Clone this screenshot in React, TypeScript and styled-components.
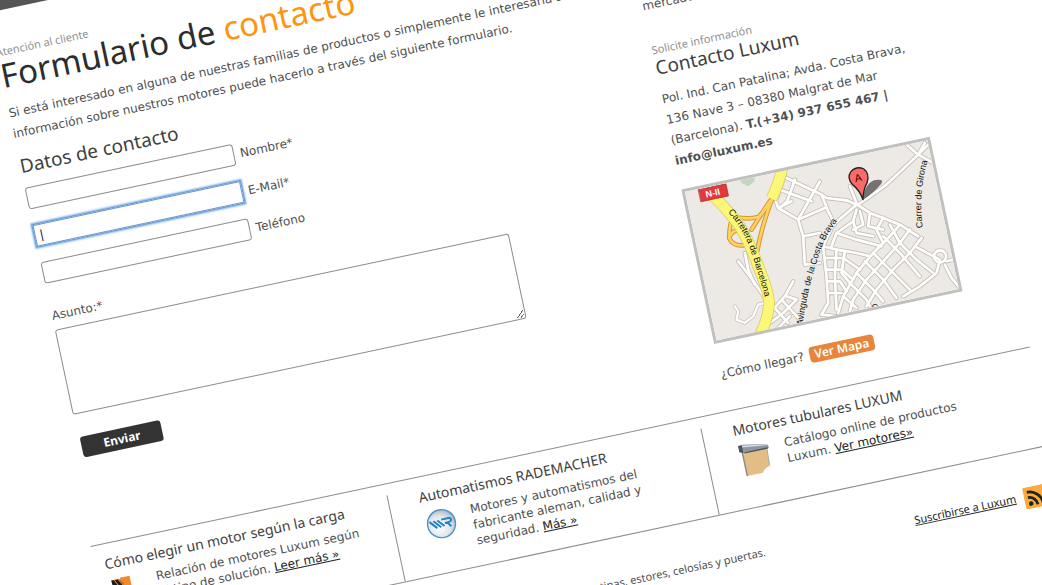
import React from "react";
import styled, { createGlobalStyle, css } from "styled-components";

const bodyFont = `"DejaVu Sans", "Noto Sans", sans-serif`;
const displayFont = `"Noto Sans", "DejaVu Sans", sans-serif`;

const GlobalStyle = createGlobalStyle`
  *, *::before, *::after { box-sizing: border-box; }
  html, body { margin: 0; background: #fff; }
  body { font: 12px/21px ${bodyFont}; color: #505050; }
  h1, h2, h3, p { margin: 0; font-weight: 400; }
`;

const Stage = styled.div`
  height: 100vh;
  overflow: hidden;
`;

const Page = styled.div`
  width: 100%;
  max-width: 960px;
  transform-origin: 0 0;
  transform: rotate(-12deg) translateX(-25px);
`;

const TopBar = styled.header`
  height: 10px;
  background: #555;
`;

const Columns = styled.main`
  display: grid;
  grid-template-columns: minmax(0, 602fr) minmax(0, 308fr);
  column-gap: 40px;
  padding: 0 0 29px 10px;
`;

const FormColumn = styled.section`
  padding-top: 33px;
`;

const ContactColumn = styled.aside`
  padding-top: 120px;
`;

const Kicker = styled.p`
  font: 11px/16px ${displayFont};
  color: #909090;
`;

const Title = styled.h1`
  font: 33px/32px ${displayFont};
  color: #2b2e30;
  white-space: nowrap;

  em {
    font-style: normal;
    color: #ff9410;
  }
`;

const Intro = styled.p`
  margin: 12px 0 10px;
  white-space: nowrap;
`;

const Subtitle = styled.h2<{ $tight?: boolean }>`
  font: 19px/24px ${displayFont};
  line-height: ${(p) => (p.$tight ? 20 : 24)}px;
  color: #404040;
`;

const Form = styled.form`
  display: flex;
  flex-direction: column;
  align-items: flex-start;
  margin-top: 10px;
`;

const Fields = styled.div`
  display: flex;
  flex-direction: column;
  gap: 16px;
  width: 100%;
`;

const Field = styled.div`
  display: flex;
  align-items: center;
  gap: 6px;

  label {
    line-height: 22px;
  }
`;

const control = css`
  border: 1px solid #8c8c8c;
  border-radius: 3px;
  background: #fff;
  color: #222;
  font: 12px/16px ${bodyFont};
  outline: none;
`;

const TextInput = styled.input<{ $focused?: boolean }>`
  ${control}
  width: 212px;
  height: 22px;
  padding: 0 4px;
  ${(p) =>
    p.$focused &&
    css`
      border-color: #6b98d0;
      border-radius: 0;
      box-shadow: 0 0 0 1px #6b98d0, 0 0 2px 2px #7fb2ec;
    `}
`;

const MessageLabel = styled.label`
  margin-top: 24px;
  line-height: 18px;
`;

const Message = styled.textarea`
  ${control}
  width: 77%;
  height: 87px;
  margin-top: 5px;
  padding: 4px 6px;
  resize: both;
`;

const SubmitButton = styled.button`
  margin: 23px 0 0 2px;
  width: 82px;
  height: 21px;
  padding: 0;
  border: 0;
  border-radius: 3px;
  background: #333;
  color: #fff;
  font: 700 12px/20px ${displayFont};
`;

const Teaser = styled.p`
  margin-bottom: 26px;
`;

const Address = styled.p`
  margin-top: 12px;
`;

const MapFrame = styled.div`
  width: 254px;
  height: 158px;
  margin-top: 18px;
  border: 3px solid #c0c0c0;
  overflow: hidden;

  svg {
    display: block;
  }
`;

const Directions = styled.div`
  display: flex;
  align-items: center;
  gap: 6px;
  margin-top: 23px;
  line-height: 16px;
`;

const MapButton = styled.a`
  padding: 0 5px;
  border-radius: 4px;
  background: #e8853a;
  color: #fff;
  font: 600 12px/16px ${displayFont};
  text-decoration: none;
`;

const Features = styled.section`
  display: grid;
  grid-template-columns: 300fr 321fr 339fr;
  padding-top: 11px;
  border-top: 1px solid #8c8c8c;
  border-bottom: 1px solid #8c8c8c;
`;

const Feature = styled.article<{ $first?: boolean }>`
  display: grid;
  grid-template-columns: 48px 1fr;
  grid-template-rows: auto 1fr;
  row-gap: 5px;
  min-height: 88px;
  padding: 0 30px 0 ${(p) => (p.$first ? 10 : 30)}px;
  border-left: ${(p) => (p.$first ? 0 : 1)}px solid #8c8c8c;

  h3 {
    grid-column: 1 / -1;
    font: 14px/18px ${displayFont};
    white-space: nowrap;
    color: #404040;
  }

  p {
    line-height: 16px;
    white-space: nowrap;
  }

  svg {
    display: block;
    margin: 1px 0 0 2px;
  }
`;

const TextLink = styled.a`
  color: #222;
  text-decoration: underline;
`;

const Footer = styled.footer`
  display: grid;
  grid-template-columns: 668fr 292fr;
  padding: 36px 13px 40px 0;
  font: 11px/18px ${displayFont};

  p {
    text-align: right;
  }
`;

const Subscribe = styled.div`
  display: flex;
  justify-content: flex-end;
  gap: 8px;

  svg {
    display: block;
  }
`;

const streets = [
  "M345 135 L318 215 L325 235 L385 270 L400 320 L405 405 L450 400",
  "M350 145 L445 190 L470 205 L530 212 L560 225",
  "M450 155 L430 190 L385 270",
  "M330 180 L425 215",
  "M375 150 L352 215 L330 235",
  "M385 270 L465 235 M455 195 L475 245 L495 285",
  "M400 320 L450 310 M325 235 L365 215",
  "M540 170 L562 225 L600 250 L640 265 L690 285 L745 320",
  "M565 225 L650 165 L745 75 L775 45",
  "M705 40 L745 75 L790 100 M745 75 L765 40",
  "M560 225 L490 285 L460 350 L470 440 L475 520 L455 555",
  "M560 240 L550 275 L500 310 L485 350",
  "M600 250 L595 290 L640 300 M640 265 L620 300 L640 340",
  "M550 275 L560 310 L610 320 M500 310 L560 330 L635 350",
  "M570 245 L580 285 L550 300",
  "M690 285 L660 320 L610 370 L560 430 L520 500 L505 550",
  "M720 300 L690 340 L640 395 L590 450 L550 510 L540 545",
  "M755 325 L720 370 L670 420 L620 480 L590 530",
  "M660 285 L690 340 L740 390 L790 430",
  "M640 320 L690 370 L750 440",
  "M610 370 L660 420 L720 480",
  "M585 395 L640 450 L680 505",
  "M560 430 L610 480 L640 515",
  "M540 460 L590 510 L600 530",
  "M520 500 L560 535",
  "M460 350 L500 360 L560 370 L600 380",
  "M465 385 L520 385 L570 420",
  "M468 420 L515 420 L550 450",
  "M472 455 L510 455 L530 485 M475 490 L515 490",
  "M500 360 L495 440 L500 540",
  "M525 365 L515 430 L540 460",
  "M755 325 L735 350 L810 390 L800 430 L750 470 L700 500",
  "M830 395 L850 390 M825 405 L845 445 L870 475",
  "M205 395 L240 440 L275 490 L300 530",
  "M225 370 L235 420 L255 465",
  "M300 550 L345 500 L370 455 M310 530 L355 580 M340 515 L385 565",
  "M300 580 L340 550 L380 510 L350 500 M320 600 L360 560",
  "M455 555 L500 560",
];

const ramps = [
  "M308 205 Q285 245 265 262 Q235 270 195 262",
  "M308 205 Q275 290 262 365",
  "M300 215 Q260 275 245 300",
  "M190 260 Q178 285 178 325 Q190 355 235 345",
  "M178 325 Q185 300 215 300",
];

const highways = [
  "M125 195 Q170 235 210 290 Q245 350 265 410 Q295 480 298 520 Q295 570 268 620",
  "M340 105 Q328 160 305 207",
];

const loop = "M810 362 a18 18 0 1 0 1 0";
const lane = "M195 530 L205 545 L200 570 L225 580 L250 560 L265 525 L285 520";

const mapFont = `"Liberation Sans", Arial, sans-serif`;

function Paths({ of }: { of: string[] }) {
  return (
    <>
      {of.map((d) => (
        <path key={d} d={d} />
      ))}
    </>
  );
}

function LocationMap() {
  return (
    <svg width="248" height="152" viewBox="0 0 248 152" role="img" aria-label="Mapa">
      <rect width="248" height="152" fill="#edeae5" />
      <g transform="matrix(.326 .0693 -.0693 .326 -1.7 -63.9)" fill="none" strokeLinecap="round" strokeLinejoin="round">
        <path d="M205 140 L250 130 L255 155 L235 170 L215 160 Z" fill="#c5d6c0" />
        <g stroke="#c4beb5" strokeWidth="13">
          <Paths of={streets} />
          <path d={loop} />
          <path d={lane} strokeWidth="11" />
        </g>
        <g stroke="#fff" strokeWidth="8">
          <Paths of={streets} />
          <path d={loop} />
          <path d={lane} strokeWidth="7" />
        </g>
        <g stroke="#d9962e" strokeWidth="14">
          <Paths of={ramps} />
        </g>
        <g stroke="#fdd262" strokeWidth="8">
          <Paths of={ramps} />
        </g>
        <g stroke="#d8cf6a" strokeWidth="35" strokeLinecap="butt">
          <Paths of={highways} />
        </g>
        <g stroke="#fdf777" strokeWidth="30" strokeLinecap="butt">
          <Paths of={highways} />
        </g>
        <path id="carretera" d="M174 248 Q215 290 238 350 Q262 420 292 525 L300 560" />
        <path id="avinguda" d="M398 588 Q412 480 440 400 Q455 340 492 288 L510 262" />
        <path id="girona" d="M759 294 Q745 200 772 96 L776 80" />
        <g fill="#111" fontSize="27" fontFamily={mapFont}>
          <text>
            <textPath href="#carretera">Carretera de Barcelona</textPath>
          </text>
          <text>
            <textPath href="#avinguda">Avinguda de la Costa Brava</textPath>
          </text>
          <text>
            <textPath href="#girona">Carrer de Girona</textPath>
          </text>
          <text x="606" y="540">C</text>
        </g>
        <g transform="translate(86 180) rotate(-12)">
          <rect width="84" height="37" fill="#e13a3e" stroke="#a82a2a" strokeWidth="2" />
          <text x="18" y="28" fill="#fff" fontSize="27" fontFamily={mapFont} fontWeight="700">
            N-II
          </text>
        </g>
        <path d="M578 212 Q582 165 612 152 Q645 146 634 162 Q615 186 578 212 Z" fill="#333" opacity=".65" />
        <path
          d="M579 210 Q570 182 548 165 Q530 145 543 126 Q560 108 582 118 Q600 132 592 158 Q580 180 579 210 Z"
          fill="#fb6a68"
          stroke="#222"
          strokeWidth="4"
        />
        <text transform="translate(557 158) rotate(-14)" fill="#300" fontSize="32" fontFamily={mapFont}>
          A
        </text>
      </g>
    </svg>
  );
}

function MotorIcon() {
  return (
    <svg width="30" height="30" viewBox="0 0 30 30" aria-hidden="true">
      <rect x="10" y="1" width="10" height="28" fill="#f08a2c" />
      <path d="M1 2h8l3 5v22H3z" fill="#1c1c1c" />
      <path d="M4 2l3 6M8 2l4 7" stroke="#f08a2c" />
    </svg>
  );
}

function RademacherIcon() {
  return (
    <svg width="30" height="30" viewBox="0 0 30 30" aria-hidden="true">
      <defs>
        <radialGradient id="disc" cx=".4" cy=".6" r=".65">
          <stop offset="0" stopColor="#fff" />
          <stop offset=".6" stopColor="#e2e5e9" />
          <stop offset="1" stopColor="#a3b4c2" />
        </radialGradient>
      </defs>
      <circle cx="15" cy="15" r="14" fill="url(#disc)" stroke="#4b93c6" strokeWidth="1.4" />
      <path d="M3.500 11l6.500 7.500M7.500 11l6.500 7.500M11.500 11l6 7" stroke="#1f82c4" strokeWidth="2" />
      <path d="M15.500 11h7.500q2.500 0 2 2.200q-.5 1.800-3 1.800h-3.500M21 15l3 4.500" fill="none" stroke="#1f82c4" strokeWidth="2" />
    </svg>
  );
}

function BlindIcon() {
  return (
    <svg width="30" height="34" viewBox="0 0 30 34" aria-hidden="true">
      <path d="M3 7h25l-1 20q-5 0-8 5H3z" fill="#e3bd85" />
      <path d="M3 7v25" stroke="#888" strokeWidth="1.4" />
      <path d="M28 8l-1 18" stroke="#aaa" />
      <path d="M0 1l3-1 27 5v4L4 8 0 6z" fill="#8d97a3" />
      <path d="M3 1l27 4v1L4 3z" fill="#d5dbe2" />
      <path d="M0 1h4v8L0 7zM5 8h24v1.500H5z" fill="#4e565f" />
    </svg>
  );
}

function RssIcon() {
  return (
    <svg width="24" height="22" viewBox="0 0 24 22" aria-hidden="true">
      <rect width="24" height="22" rx="2" fill="#f9ab3c" />
      <circle cx="6" cy="17" r="2.300" fill="#222" />
      <path
        d="M4 10.500a8.500 8.500 0 0 1 8.500 8.500M4 5a14 14 0 0 1 14 14"
        fill="none"
        stroke="#222"
        strokeWidth="2.800"
      />
    </svg>
  );
}

export default function App() {
  return (
    <Stage>
      <GlobalStyle />
      <Page>
        <TopBar />
        <Columns>
          <FormColumn>
            <Kicker>Atención al cliente</Kicker>
            <Title>
              Formulario de <em>contacto</em>
            </Title>
            <Intro>
              Si está interesado en alguna de nuestras familias de productos o simplemente le interesaría solicitar
              <br />
              información sobre nuestros motores puede hacerlo a través del siguiente formulario.
            </Intro>
            <Subtitle>Datos de contacto</Subtitle>
            <Form onSubmit={(e) => e.preventDefault()}>
              <Fields>
                <Field>
                  <TextInput id="nombre" type="text" />
                  <label htmlFor="nombre">Nombre*</label>
                </Field>
                <Field>
                  <TextInput id="email" type="text" $focused defaultValue="|" />
                  <label htmlFor="email">E-Mail*</label>
                </Field>
                <Field>
                  <TextInput id="telefono" type="tel" />
                  <label htmlFor="telefono">Teléfono</label>
                </Field>
              </Fields>
              <MessageLabel htmlFor="asunto">Asunto:*</MessageLabel>
              <Message id="asunto" />
              <SubmitButton type="submit">Enviar</SubmitButton>
            </Form>
          </FormColumn>
          <ContactColumn>
            <Teaser>mercado.</Teaser>
            <Kicker>Solicite información</Kicker>
            <Subtitle $tight>Contacto Luxum</Subtitle>
            <Address>
              Pol. Ind. Can Patalina; Avda. Costa Brava,
              <br />
              136 Nave 3 – 08380 Malgrat de Mar
              <br />
              (Barcelona). <b>T.(+34) 937 655 467 |</b>
              <br />
              <b>info@luxum.es</b>
            </Address>
            <MapFrame>
              <LocationMap />
            </MapFrame>
            <Directions>
              ¿Cómo llegar? <MapButton href="#mapa">Ver Mapa</MapButton>
            </Directions>
          </ContactColumn>
        </Columns>
        <Features>
          <Feature $first>
            <h3>Cómo elegir un motor según la carga</h3>
            <MotorIcon />
            <p>
              Relación de motores Luxum según
              <br />
              el tipo de solución. <TextLink href="#carga">Leer más »</TextLink>
            </p>
          </Feature>
          <Feature>
            <h3>Automatismos RADEMACHER</h3>
            <RademacherIcon />
            <p>
              Motores y automatismos del
              <br />
              fabricante aleman, calidad y
              <br />
              seguridad. <TextLink href="#rademacher">Más »</TextLink>
            </p>
          </Feature>
          <Feature>
            <h3>Motores tubulares LUXUM</h3>
            <BlindIcon />
            <p>
              Catálogo online de productos
              <br />
              Luxum. <TextLink href="#motores">Ver motores»</TextLink>
            </p>
          </Feature>
        </Features>
        <Footer>
          <p>Motores para persianas, toldos, cortinas, estores, celosías y puertas.</p>
          <Subscribe>
            <TextLink href="#rss">Suscribirse a Luxum</TextLink>
            <RssIcon />
          </Subscribe>
        </Footer>
      </Page>
    </Stage>
  );
}
